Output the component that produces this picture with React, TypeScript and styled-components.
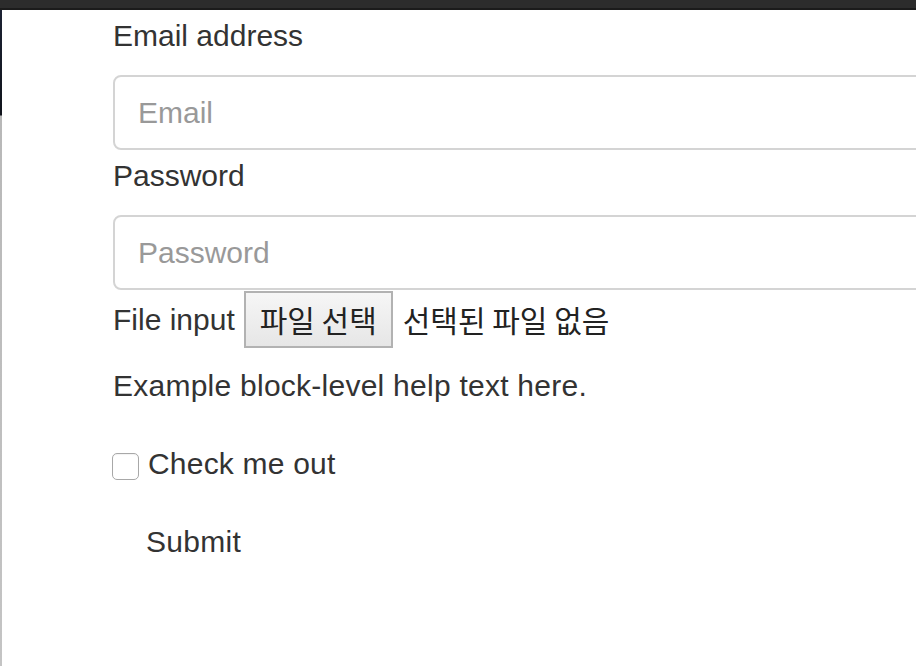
import styled, { createGlobalStyle } from "styled-components";

const GlobalStyle = createGlobalStyle`
  html, body {
    margin: 0;
    padding: 0;
    background: #ffffff;
  }
  body {
    font-family: "Liberation Sans", Arial, sans-serif;
    color: #333333;
    overflow: hidden;
  }
`;

const StyledPage = styled.div`
  width: 916px;
  height: 666px;
  display: flex;
  flex-direction: column;
  overflow: hidden;
`;

const StyledTopBar = styled.div`
  height: 8px;
  flex-shrink: 0;
  background: #2c2c2c;
  border-bottom: 2px solid #1b1b1b;
`;

const StyledBody = styled.div`
  flex: 1;
  display: flex;
  min-height: 0;
`;

const StyledEdge = styled.div`
  width: 2px;
  flex-shrink: 0;
  background: linear-gradient(to bottom, #1c2233 0, #10141c 105px, #b8b8b8 106px, #c4c4c4 100%);
`;

const StyledForm = styled.form`
  flex: 1;
  padding-left: 111px;
  overflow: hidden;
`;

const StyledLabel = styled.label`
  display: block;
  font-size: 30px;
  line-height: 43px;
  padding-top: 4px;
  margin-bottom: 18px;
`;

const StyledInput = styled.input`
  display: block;
  box-sizing: border-box;
  width: 900px;
  height: 75px;
  padding: 0 23px;
  border: 2px solid #d4d4d4;
  border-radius: 8px;
  font-family: "Liberation Sans", Arial, sans-serif;
  font-size: 30px;
  color: #333333;
  background: #ffffff;
  &::placeholder {
    color: #999999;
  }
  &:focus {
    outline: none;
  }
`;

const StyledFileRow = styled.div`
  display: flex;
  align-items: center;
  height: 58px;
`;

const StyledInlineLabel = styled.span`
  font-size: 30px;
  line-height: 43px;
  margin-right: 9px;
`;

const StyledFileBtn = styled.span`
  box-sizing: border-box;
  width: 149px;
  height: 57px;
  display: flex;
  align-items: center;
  justify-content: center;
  border: 2px solid #b2b2b2;
  background: linear-gradient(to bottom, #f6f6f6, #e6e6e6);
  font-family: "Noto Sans CJK KR", sans-serif;
  font-size: 30px;
  color: #222222;
`;

const StyledFileName = styled.span`
  margin-left: 10px;
  font-family: "Noto Sans CJK KR", sans-serif;
  font-size: 30px;
  color: #222222;
`;

const StyledHelp = styled.p`
  margin: 16px 0 0;
  font-size: 30px;
  line-height: 43px;
  letter-spacing: 0.25px;
  color: #333333;
`;

const StyledCheckRow = styled.label`
  display: flex;
  align-items: flex-start;
  margin-top: 35px;
  font-size: 30px;
  line-height: 43px;
  letter-spacing: 0.2px;
`;

const StyledCheckBox = styled.span`
  box-sizing: border-box;
  width: 27px;
  height: 27px;
  margin-top: 11px;
  margin-left: -1px;
  margin-right: 9px;
  border: 1px solid #a8a8a8;
  border-radius: 5px;
  background: #ffffff;
  box-shadow: inset 0 1px 1px rgba(0, 0, 0, 0.05);
`;

const StyledSubmit = styled.button`
  display: block;
  margin-top: 35px;
  padding: 0 0 0 33px;
  border: none;
  background: transparent;
  font-family: "Liberation Sans", Arial, sans-serif;
  font-size: 30px;
  line-height: 43px;
  letter-spacing: 0.3px;
  color: #333333;
  cursor: pointer;
`;

const App = () => {
  return (
    <>
      <GlobalStyle />
      <StyledPage>
        <StyledTopBar />
        <StyledBody>
          <StyledEdge />
          <StyledForm onSubmit={(e) => e.preventDefault()}>
            <StyledLabel htmlFor="email">Email address</StyledLabel>
            <StyledInput id="email" type="email" placeholder="Email" />

            <StyledLabel htmlFor="pw">Password</StyledLabel>
            <StyledInput id="pw" type="password" placeholder="Password" />

            <StyledFileRow>
              <StyledInlineLabel>File input</StyledInlineLabel>
              <StyledFileBtn>파일 선택</StyledFileBtn>
              <StyledFileName>선택된 파일 없음</StyledFileName>
            </StyledFileRow>

            <StyledHelp>Example block-level help text here.</StyledHelp>

            <StyledCheckRow>
              <StyledCheckBox />
              Check me out
            </StyledCheckRow>

            <StyledSubmit type="submit">Submit</StyledSubmit>
          </StyledForm>
        </StyledBody>
      </StyledPage>
    </>
  );
};

export default App;
